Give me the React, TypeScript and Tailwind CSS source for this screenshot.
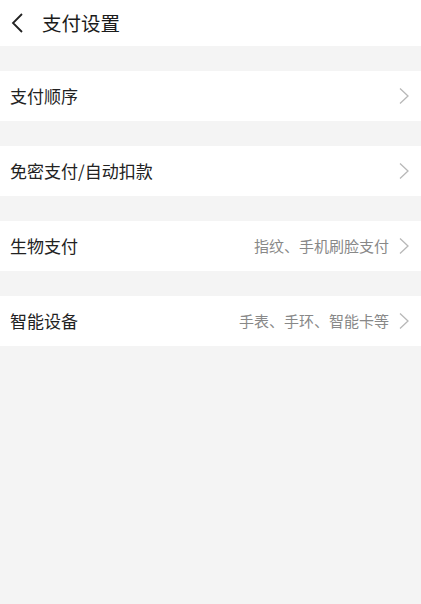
import React from "react";

const rows = [
  { label: "支付顺序", sub: "" },
  { label: "免密支付/自动扣款", sub: "" },
  { label: "生物支付", sub: "指纹、手机刷脸支付" },
  { label: "智能设备", sub: "手表、手环、智能卡等" },
];

const Chevron = () => (
  <svg width="12" height="18" viewBox="0 0 12 18" fill="none">
    <path d="M2 1.5 L10 9 L2 16.5" stroke="#b8b8b8" strokeWidth="1.3" />
  </svg>
);

const App: React.FC = () => {
  return (
    <div
      className="w-[421px] h-[604px] bg-[#f4f4f4] flex flex-col"
      style={{ fontFamily: '"Noto Sans CJK SC", "Noto Sans", sans-serif' }}
    >
      <div className="h-[46px] bg-white flex items-center">
        <svg className="ml-[10px]" width="14" height="22" viewBox="0 0 14 22" fill="none">
          <path d="M12 2 L3 11 L12 20" stroke="#222" strokeWidth="1.8" />
        </svg>
        <div className="ml-[18px] text-[19.5px] text-[#1b1b1b] leading-none">支付设置</div>
      </div>
      <div className="flex flex-col gap-[25px] pt-[25px]">
        {rows.map((row) => (
          <div
            key={row.label}
            className="h-[50px] bg-white flex items-center pl-[10px] pr-[11px]"
          >
            <div className="text-[17px] text-[#222] flex-1">{row.label}</div>
            {row.sub && (
              <div className="text-[15px] text-[#888] mr-[9px]">{row.sub}</div>
            )}
            <Chevron />
          </div>
        ))}
      </div>
    </div>
  );
};

export default App;
